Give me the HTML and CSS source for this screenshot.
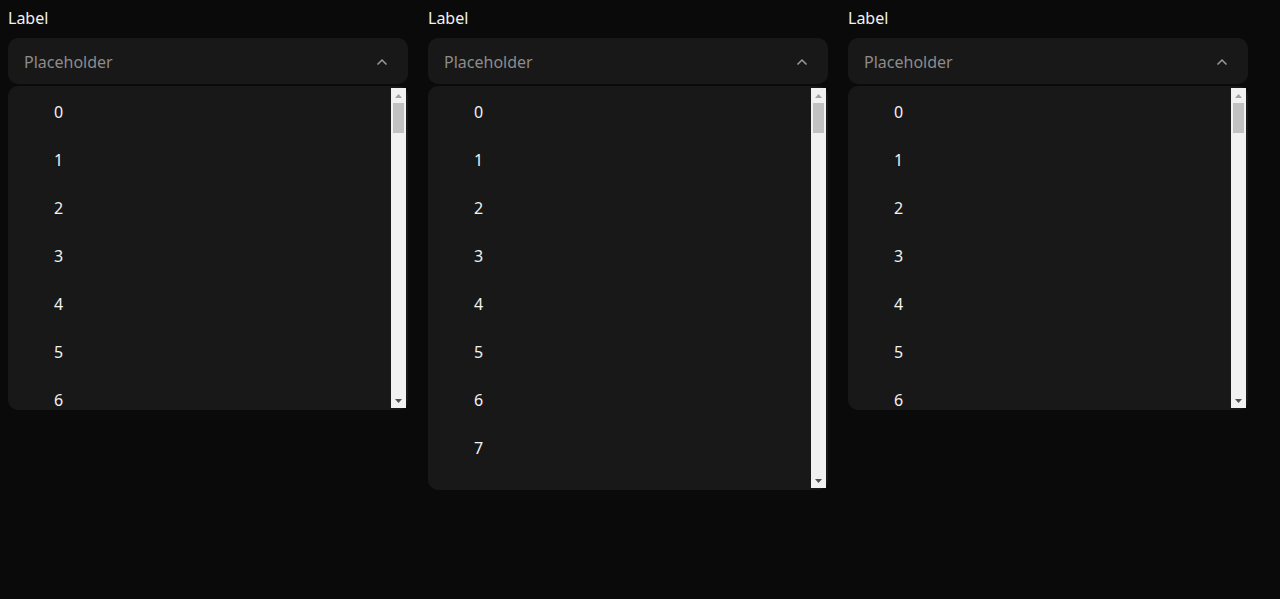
FILE: index.html
```html
<!DOCTYPE html>
<html>
<head>
<meta charset="utf-8">
<link rel="stylesheet" href="styles.css">
</head>
<body>
<div class="row" id="row"></div>
<script src="app.js"></script>
</body>
</html>
```
FILE: styles.css
```css
html, body { margin: 0; padding: 0; background: #0a0a0a; }
body { padding: 8px; font-family: "Noto Sans", "Open Sans", sans-serif; color: #f2f2f2; }
.row { display: flex; gap: 20px; align-items: flex-start; }
.field { width: 400px; display: flex; flex-direction: column; }
.label { font-size: 16px; line-height: 20px; height: 20px; margin-bottom: 10px; }
.trigger { height: 46px; background: #181818; border-radius: 10px; display: flex; align-items: center; justify-content: space-between; padding: 2px 20px 0 16px; box-sizing: border-box; }
.placeholder { font-size: 16px; color: #8c8c8c; }
.chev { width: 12px; height: 8px; display: block; }
.list { margin-top: 2px; background: #181818; border: 2px solid #181818; border-radius: 10px; display: flex; height: 320px; }
.list.tall { height: 400px; }
.items { flex: 1; overflow: hidden; }
.sbar { width: 15px; background: #f1f1f1; display: flex; flex-direction: column; }
.sbtn { height: 15px; display: flex; align-items: center; justify-content: center; flex: none; }
.sbtn svg { width: 7px; height: 4px; display: block; }
.thumb { height: 30px; margin: 0 2px; background: #c1c1c1; flex: none; }
.spacer { flex: 1; }
.item { height: 48px; display: flex; align-items: center; padding-left: 44px; font-size: 16px; line-height: 16px; color: #f2f2f2; }
```
FILE: app.js
```js
const row = document.getElementById('row');
const chev = '<svg class="chev" viewBox="0 0 12 8"><path d="M1.5 6.5 L6 2 L10.5 6.5" fill="none" stroke="#9a9a9a" stroke-width="1.5"/></svg>';
const up = '<svg viewBox="0 0 7 4"><path d="M0 4 L3.5 0 L7 4 Z" fill="#a3a3a3"/></svg>';
const down = '<svg viewBox="0 0 7 4"><path d="M0 0 L3.5 4 L7 0 Z" fill="#505050"/></svg>';
[7, 8, 7].forEach(n => {
  const f = document.createElement('div');
  f.className = 'field';
  let items = '';
  for (let i = 0; i < n; i++) items += '<div class="item">' + i + '</div>';
  f.innerHTML = '<div class="label">Label</div>' +
    '<div class="trigger"><span class="placeholder">Placeholder</span>' + chev + '</div>' +
    '<div class="list' + (n > 7 ? ' tall' : '') + '"><div class="items">' + items + '</div>' +
    '<div class="sbar"><div class="sbtn">' + up + '</div><div class="thumb"></div><div class="spacer"></div><div class="sbtn">' + down + '</div></div></div>';
  row.appendChild(f);
});
```
